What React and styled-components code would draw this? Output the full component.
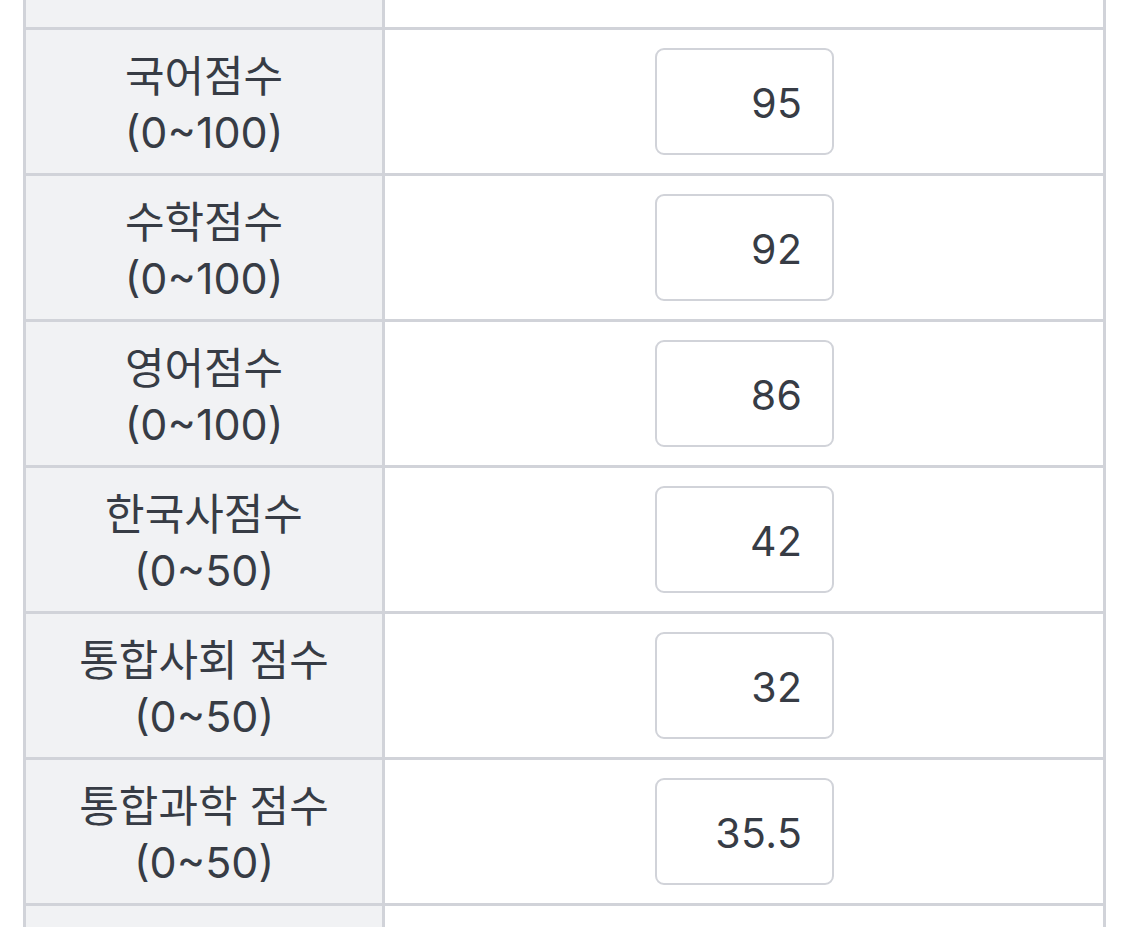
import React from 'react'
import styled, { createGlobalStyle } from 'styled-components'

const GlobalStyle = createGlobalStyle`
    body {
        margin: 0;
        background: #ffffff;
        font-family: Inter, "Noto Sans CJK KR", sans-serif;
        color: #373c45;
    }
`

const Page = styled.div`
    height: 927px;
    overflow: hidden;
    padding-left: 23px;
`

const Table = styled.div`
    width: 1083px;
    border-left: 3px solid #d1d3d9;
    border-right: 3px solid #d1d3d9;
    box-sizing: border-box;
`

const Row = styled.div`
    display: grid;
    grid-template-columns: 359px 1fr;
    height: ${p => p.height}px;
    box-sizing: border-box;
    border-top: ${p => (p.first ? 'none' : '3px solid #d1d3d9')};
`

const Label = styled.div`
    background: #f1f2f4;
    border-right: 3px solid #d1d3d9;
    display: flex;
    flex-direction: column;
    align-items: center;
    justify-content: center;
    font-size: 43px;
    line-height: 56px;
    text-align: center;
    padding-top: 4px;
    box-sizing: border-box;
`

const Field = styled.div`
    display: flex;
    align-items: center;
    justify-content: center;
    background: #ffffff;
`

const ScoreInput = styled.input`
    width: 179px;
    height: 107px;
    box-sizing: border-box;
    border: 2px solid #d1d3d9;
    border-radius: 9px;
    padding: 2px 29px 0 0;
    text-align: right;
    font-family: Inter, "Noto Sans CJK KR", sans-serif;
    font-size: 41px;
    letter-spacing: 0.5px;
    color: #373c45;
    background: #ffffff;
    outline: none;
`

const rows = [
    { name: '국어점수', range: '(0~100)', value: '95' },
    { name: '수학점수', range: '(0~100)', value: '92' },
    { name: '영어점수', range: '(0~100)', value: '86' },
    { name: '한국사점수', range: '(0~50)', value: '42' },
    { name: '통합사회 점수', range: '(0~50)', value: '32' },
    { name: '통합과학 점수', range: '(0~50)', value: '35.5' },
]

export default function App() {
    return (
        <Page>
            <GlobalStyle />
            <Table>
                <Row first height={27}>
                    <Label />
                    <Field />
                </Row>
                {rows.map(r => (
                    <Row key={r.name} height={146}>
                        <Label>
                            <span>{r.name}</span>
                            <span>{r.range}</span>
                        </Label>
                        <Field>
                            <ScoreInput type="text" readOnly defaultValue={r.value} />
                        </Field>
                    </Row>
                ))}
                <Row height={40}>
                    <Label />
                    <Field />
                </Row>
            </Table>
        </Page>
    )
}
